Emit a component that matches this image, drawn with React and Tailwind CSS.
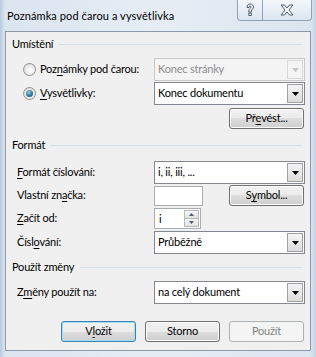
import React from "react";

const F = { fontFamily: 'Lato, "Liberation Sans", sans-serif' };

function U({ children }) {
  return <span className="underline decoration-1 underline-offset-[2px]">{children}</span>;
}

function Arrow({ disabled }) {
  return (
    <div
      className={`m-[1px] flex h-[19px] w-[16px] items-center justify-center border ${
        disabled
          ? "border-[#d9d9d9] bg-[#f4f4f4]"
          : "border-[#a0a0a0] bg-[linear-gradient(#f4f4f4,#dcdcdc)]"
      }`}
    >
      <svg width="7" height="4" viewBox="0 0 7 4">
        <polygon points="0,0 7,0 3.5,4" fill={disabled ? "#c4c4c4" : "#000"} />
      </svg>
    </div>
  );
}

function Combo({ text, disabled }) {
  return (
    <div
      className={`flex h-[23px] w-[151px] items-center border ${
        disabled
          ? "border-[#c9c9c9] bg-[#f4f4f4] text-[#8d8d8d]"
          : "border-[#828790] bg-white text-black"
      }`}
    >
      <span className="flex-1 truncate pl-[3px]">{text}</span>
      <Arrow disabled={disabled} />
    </div>
  );
}

function Btn({ children, kind = "normal" }) {
  const cls =
    kind === "default"
      ? "border-[#3c7fb1] bg-[linear-gradient(#f2f2f2_0%,#ebebeb_50%,#dddddd_50%,#cfcfcf_100%)] shadow-[inset_0_0_0_1px_#9fe0fb] text-black"
      : kind === "disabled"
      ? "border-[#adb2b5] bg-[#f4f4f4] text-[#838383]"
      : "border-[#707070] bg-[linear-gradient(#f2f2f2_0%,#ebebeb_50%,#dddddd_50%,#cfcfcf_100%)] shadow-[inset_0_0_0_1px_#fcfcfc] text-black";
  return (
    <div className={`flex h-[21px] w-[75px] items-center justify-center rounded-[3px] border ${cls}`}>
      {children}
    </div>
  );
}

function Header({ children, className = "" }) {
  return (
    <div className={`flex h-[14px] items-center pl-[6px] pr-[8px] ${className}`}>
      <span className="leading-[14px]">{children}</span>
      <div className="ml-[6px] h-[1px] flex-1 bg-[#d5dfe5]" />
    </div>
  );
}

function Radio({ checked }) {
  return (
    <div className="flex h-[13px] w-[13px] items-center justify-center rounded-full border border-[#8e8f8f] bg-[radial-gradient(circle_at_60%_60%,#ffffff,#d6d6d6)]">
      {checked && (
        <div className="h-[7px] w-[7px] rounded-full bg-[radial-gradient(circle_at_40%_35%,#8fd0ea,#1d5f8a_70%)]" />
      )}
    </div>
  );
}

function Spinner() {
  return (
    <div className="flex h-[21px] w-[47px] items-stretch border border-[#abadb3] bg-white">
      <span className="flex-1 pl-[4px] leading-[19px]">i</span>
      <div className="m-[1px] flex w-[15px] flex-col">
        <div className="flex flex-1 items-center justify-center border border-[#b8b8b8] bg-[linear-gradient(#f6f6f6,#e2e2e2)]">
          <svg width="5" height="3" viewBox="0 0 5 3">
            <polygon points="2.5,0 5,3 0,3" fill="#4a5c74" />
          </svg>
        </div>
        <div className="flex flex-1 items-center justify-center border border-t-0 border-[#b8b8b8] bg-[linear-gradient(#f6f6f6,#e2e2e2)]">
          <svg width="5" height="3" viewBox="0 0 5 3">
            <polygon points="0,0 5,0 2.5,3" fill="#4a5c74" />
          </svg>
        </div>
      </div>
    </div>
  );
}

export default function App() {
  return (
    <div
      style={F}
      className="relative h-[357px] w-[316px] overflow-hidden bg-[linear-gradient(90deg,#b9c9dc_0px,#dbe5f0_5px,#e6edf5_50%,#dbe5f0_311px,#c5d3e3_316px)] text-[11px] tracking-[-0.2px] text-black"
    >
      {/* title bar */}
      <div className="flex h-[31px] items-start justify-between">
        <div className="pl-[7px] pt-[7px] text-[11px] leading-[18px] tracking-[0.1px] text-black">
          Poznámka pod čarou a vysvětlivka
        </div>
        <div className="mr-[4px] flex h-[21px]">
          <div className="flex w-[26px] items-center justify-center rounded-bl-[4px] border border-t-0 border-[#8ea1b8] bg-[linear-gradient(#f3f7fb,#dce6f1)]">
            <svg width="10" height="14" viewBox="0 0 10 14">
              <path
                d="M2 4.5 C2 2 3.5 1 5 1 C7 1 8.5 2.2 8.5 4 C8.5 5.8 6.5 6.3 6.3 8 L6.3 9 L3.8 9 L3.8 7.6 C3.8 5.6 6 5.2 6 4 C6 3.3 5.6 3 5 3 C4.3 3 4 3.5 4 4.5 Z M3.8 10 L6.3 10 L6.3 12.5 L3.8 12.5 Z"
                fill="#f4f7fa"
                stroke="#3f4f63"
                strokeWidth="0.9"
                strokeLinejoin="round"
              />
            </svg>
          </div>
          <div className="flex w-[49px] items-center justify-center rounded-br-[4px] border border-l-0 border-t-0 border-[#8ea1b8] bg-[linear-gradient(#f3f7fb,#dce6f1)]">
            <svg width="14" height="12" viewBox="0 0 14 12">
              <polygon
                points="1,1 4.5,1 7,4 9.5,1 13,1 9,6 13,11 9.5,11 7,8 4.5,11 1,11 5,6"
                fill="#f4f7fa"
                stroke="#3f4f63"
                strokeWidth="0.9"
                strokeLinejoin="round"
              />
            </svg>
          </div>
        </div>
      </div>

      {/* client */}
      <div className="mx-[5px] h-[320px] border border-[#8c99a8] bg-[#f0f0f0]">
        <Header className="mt-[5px]">Umístění</Header>

        <div className="mt-[7px] flex h-[23px] items-center">
          <div className="flex w-[148px] items-center pl-[17px]">
            <Radio />
            <span className="ml-[4px] whitespace-nowrap">
              Poz<U>n</U>ámky pod čarou:
            </span>
          </div>
          <Combo text="Konec stránky" disabled />
        </div>
        <div className="mt-[1px] flex h-[23px] items-center">
          <div className="flex w-[148px] items-center pl-[17px]">
            <Radio checked />
            <span className="ml-[4px]">
              <U>V</U>ysvětlivky:
            </span>
          </div>
          <Combo text="Konec dokumentu" />
        </div>
        <div className="mt-[3px] flex justify-end pr-[6px]">
          <Btn>
            Př<U>e</U>vést...
          </Btn>
        </div>

        <Header className="mt-[9px]">Formát</Header>

        <div className="mt-[9px] flex h-[23px] items-center">
          <div className="w-[148px] pl-[11px]">
            <U>F</U>ormát číslování:
          </div>
          <Combo text="i, ii, iii, ..." />
        </div>
        <div className="mt-[1px] flex h-[21px] items-center">
          <div className="w-[148px] pl-[11px]">
            Vlastní zn<U>a</U>čka:
          </div>
          <div className="h-[20px] w-[49px] border border-[#abadb3] bg-white" />
          <div className="ml-auto pr-[6px]">
            <Btn>
              S<U>y</U>mbol...
            </Btn>
          </div>
        </div>
        <div className="mt-[2px] flex h-[21px] items-center">
          <div className="w-[148px] pl-[11px]">
            <U>Z</U>ačít od:
          </div>
          <Spinner />
        </div>
        <div className="mt-[2px] flex h-[23px] items-center">
          <div className="w-[148px] pl-[11px]">
            Čísl<U>o</U>vání:
          </div>
          <Combo text="Průběžně" />
        </div>

        <Header className="mt-[6px]">Použít změny</Header>

        <div className="mt-[7px] flex h-[23px] items-center">
          <div className="w-[148px] pl-[11px]">
            Z<U>m</U>ěny použít na:
          </div>
          <Combo text="na celý dokument" />
        </div>

        <div className="mt-[17px] flex justify-end gap-[9px] pr-[6px]">
          <Btn kind="default">
            V<U>l</U>ožit
          </Btn>
          <Btn>Storno</Btn>
          <Btn kind="disabled">Použít</Btn>
        </div>
      </div>
    </div>
  );
}
